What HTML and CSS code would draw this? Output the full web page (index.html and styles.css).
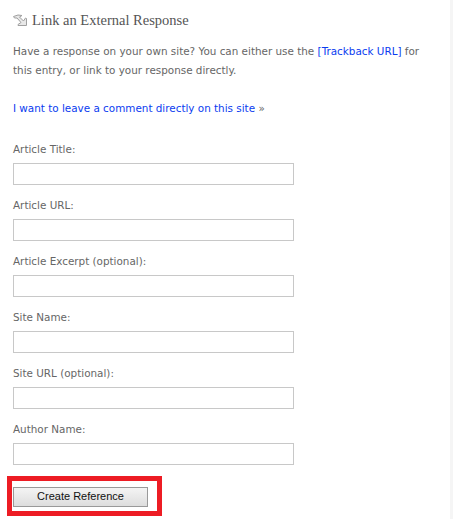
FILE: index.html
```html
<!DOCTYPE html>
<html lang="en">
<head>
    <meta charset="UTF-8">
    <title>Link an External Response</title>
    <link rel="stylesheet" href="styles.css">
</head>
<body>
    <div class="response">
        <h3 class="response-title">
            <svg class="title-icon" width="15" height="13" viewBox="0 0 15 13">
                <path d="M0.5 2.5 L5 1 L9 1.5 L6.5 3 L10.5 7 L12.5 4 L13.5 4.5 L13.5 11.5 L5 11.5 L5 10.5 L8 8.5 L4 4 L1.5 4 Z" fill="#e8e8e8" stroke="#a0a0a0" stroke-width="1"/>
            </svg>
            Link an External Response
        </h3>
        <p class="intro">Have a response on your own site? You can either use the <a href="#">[Trackback URL]</a> for this entry, or link to your response directly.</p>
        <p class="switch"><a href="#">I want to leave a comment directly on this site</a> »</p>
        <form class="response-form">
            <label class="field">Article Title:<input type="text"></label>
            <label class="field">Article URL:<input type="text"></label>
            <label class="field">Article Excerpt (optional):<input type="text"></label>
            <label class="field">Site Name:<input type="text"></label>
            <label class="field">Site URL (optional):<input type="text"></label>
            <label class="field">Author Name:<input type="text"></label>
            <div class="submit-box">
                <button type="button" class="submit-btn">Create Reference</button>
            </div>
        </form>
    </div>
</body>
</html>
```

FILE: styles.css
```css
* {
    margin: 0;
    padding: 0;
    box-sizing: border-box;
}

html, body {
    height: 519px;
    overflow: hidden;
}

body {
    background-color: #ffffff;
    color: #666666;
    font-family: "DejaVu Sans", sans-serif;
    font-size: 10.4px;
}

a {
    color: #0a3cf0;
    text-decoration: none;
}

.response {
    height: 519px;
    padding: 12px 0 0 13px;
    border-right: 3px solid #f5f5f5;
}

.response-title {
    display: flex;
    align-items: center;
    gap: 4px;
    font-family: "Liberation Serif", serif;
    font-size: 14.5px;
    font-weight: normal;
    line-height: 17px;
    color: #555555;
}

.intro {
    max-width: 415px;
    margin-top: 13px;
    line-height: 19px;
}

.switch {
    margin-top: 19px;
    line-height: 19px;
}

.response-form {
    margin-top: 23px;
}

.field {
    display: block;
    line-height: 16px;
    margin-bottom: 12px;
}

.field input {
    display: block;
    width: 281px;
    height: 22px;
    margin-top: 6px;
    border: 1px solid #c8c8c8;
    background-color: #ffffff;
}

.submit-box {
    width: 155px;
    height: 40px;
    margin: -1px 0 0 -6px;
    padding: 6px 1px;
    border: 5px solid #ed1c24;
}

.submit-btn {
    display: block;
    width: 135px;
    height: 20px;
    padding-bottom: 2px;
    border: 1px solid #999999;
    background: linear-gradient(#f4f4f4, #dddddd);
    color: #111111;
    font-family: "Liberation Sans", sans-serif;
    font-size: 11px;
}
```
